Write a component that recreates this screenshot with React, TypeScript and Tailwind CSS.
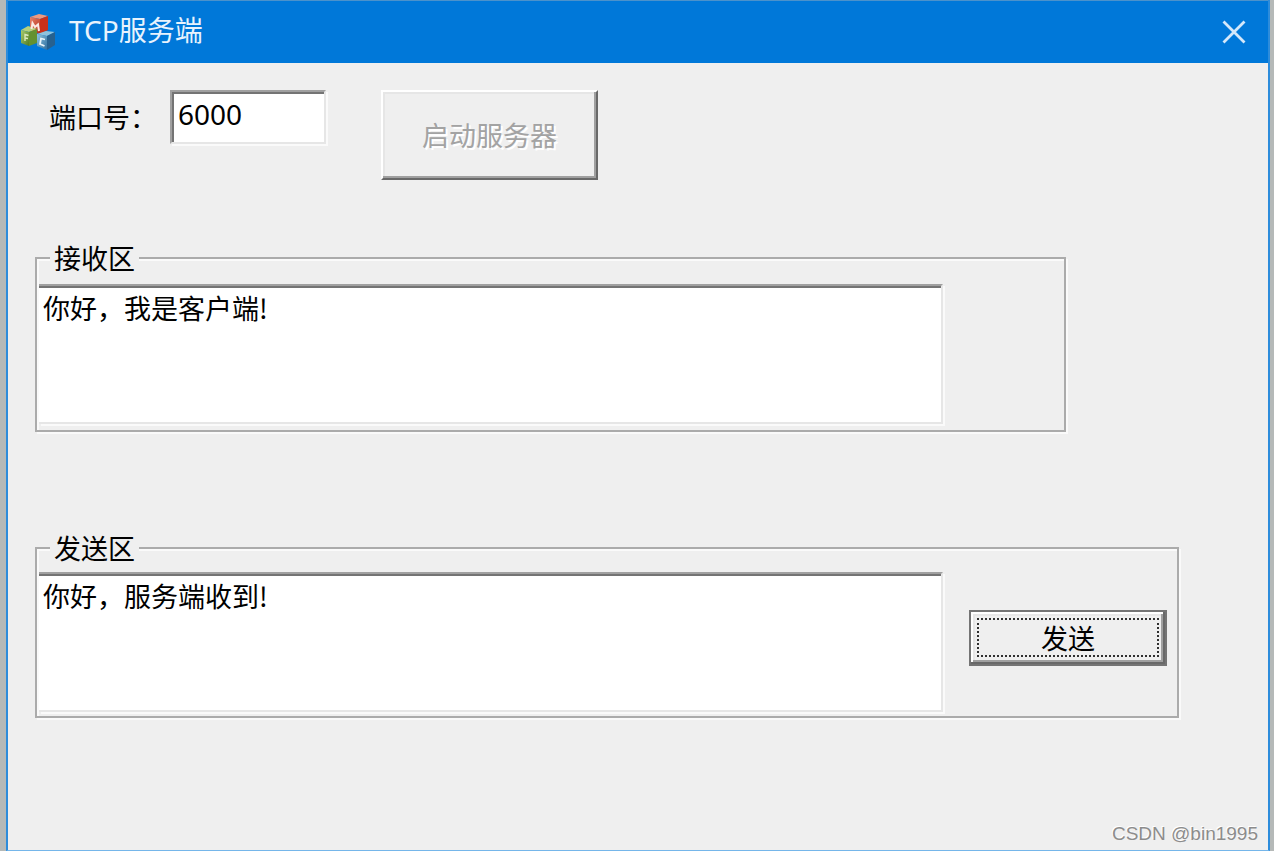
import { useState } from "react";

function CubesIcon() {
  return (
    <svg className="h-9 w-9 shrink-0" viewBox="0 0 36 36" aria-hidden="true">
      <defs>
        <linearGradient id="red" x1="0" y1="0" x2="1" y2="1">
          <stop offset="0" stopColor="#e8836a" />
          <stop offset="1" stopColor="#b32d1c" />
        </linearGradient>
        <linearGradient id="green" x1="0" y1="0" x2="1" y2="1">
          <stop offset="0" stopColor="#a9cc6c" />
          <stop offset="1" stopColor="#4f7a26" />
        </linearGradient>
        <linearGradient id="blue" x1="0" y1="0" x2="1" y2="1">
          <stop offset="0" stopColor="#8ec4e0" />
          <stop offset="1" stopColor="#2f6f9f" />
        </linearGradient>
      </defs>
      <path d="M9 3 L18 0 L27 2 L19 5 Z" fill="#ee9a80" />
      <path d="M9 3 L19 5 L19 20 L9 17 Z" fill="url(#red)" />
      <path d="M19 5 L27 2 L27 16 L19 20 Z" fill="#c9301b" />
      <path d="M0 16 L7 12 L16 15 L8 18 Z" fill="#b5d17c" />
      <path d="M0 16 L8 18 L8 32 L0 29 Z" fill="url(#green)" />
      <path d="M8 18 L16 15 L16 29 L8 32 Z" fill="#64912f" />
      <path d="M16 20 L25 17 L34 18 L26 22 Z" fill="#8fc3de" />
      <path d="M16 20 L26 22 L26 36 L16 32 Z" fill="url(#blue)" />
      <path d="M26 22 L34 18 L34 31 L26 36 Z" fill="#27618f" />
      <path d="M10.500 15 L11.500 9 L14 13 L17 10.500 L18 17" fill="none" stroke="#fbe9e4" strokeWidth="2" />
      <path d="M4 27 L4 20.500 L7.500 21.500 M4 24 L7 24.500" fill="none" stroke="#dbe9bd" strokeWidth="1.400" />
      <path d="M24 25.500 L20 24.500 L19 30 L23.500 32" fill="none" stroke="#e9f5fb" strokeWidth="1.800" />
    </svg>
  );
}

const areaClass =
  "block h-[140px] min-w-0 flex-1 resize-none overflow-hidden rounded-none border-t-2 border-r-2 border-b-2 border-t-[#a0a0a0] border-r-[#e6e6e6] border-b-[#e6e6e6] bg-white pt-2 pl-1 text-[27px] leading-7 text-black shadow-[inset_0_2px_0_#747474,2px_2px_0_#fafafa] outline-none";
const groupClass =
  "min-w-0 border-2 border-[#ababab] pl-0.5 shadow-[2px_2px_0_#fafafa,inset_2px_2px_0_#fafafa]";
const legendClass = "ml-[11px] bg-[#efefef] px-1 text-[27px] leading-7";

export default function App() {
  const [port, setPort] = useState("6000");
  const [received, setReceived] = useState("你好，我是客户端!");
  const [outgoing, setOutgoing] = useState("你好，服务端收到!");

  return (
    <div className="flex min-h-screen bg-[#b5b9b8] pr-1 pl-1.5 font-['Noto_Sans_CJK_SC',sans-serif] text-black">
      <div className="flex flex-1 flex-col border-x-2 border-b border-x-[#2d8cdb] border-b-[#75b6ea] bg-[#efefef]">
        <header className="flex h-[63px] items-center border-t border-[#4c92cb] bg-[#0078d9] pr-5 pl-[13px] text-white">
          <CubesIcon />
          <h1 className="ml-3 flex-1 pb-1 font-['Noto_Sans','Noto_Sans_CJK_SC',sans-serif] text-[28px] leading-8 font-normal text-[#e8f3fd]">
            TCP服务端
          </h1>
          <button type="button" aria-label="关闭" className="p-0.5">
            <svg className="size-6" viewBox="0 0 24 24" fill="none" stroke="#d4e8fa" strokeWidth="2.800">
              <path d="M1.500 1.500 L22.500 22.500 M22.500 1.500 L1.500 22.500" />
            </svg>
          </button>
        </header>

        <main className="flex flex-1 flex-col pt-[27px] pl-[27px]">
          <div className="flex items-start pl-3.5">
            <label htmlFor="port" className="w-[121px] pt-[11px] text-[27px] leading-8">
              端口号：
            </label>
            <input
              id="port"
              value={port}
              onChange={(e) => setPort(e.target.value)}
              className="h-[54px] w-[156px] rounded-none border-2 border-t-[#a0a0a0] border-r-[#e6e6e6] border-b-[#e6e6e6] border-l-[#a0a0a0] bg-white pb-1.5 pl-1.5 font-['Noto_Sans',sans-serif] text-[28px] leading-8 shadow-[inset_2px_2px_0_#747474,2px_2px_0_#fafafa] outline-none"
            />
            <button
              type="button"
              disabled
              className="ml-[55px] h-[90px] w-[217px] border-2 border-t-white border-r-[#696969] border-b-[#696969] border-l-white text-[27px] text-[#a3a3a3] shadow-[inset_-2px_-2px_0_#a0a0a0,inset_2px_2px_0_#e6e6e6] [text-shadow:2px_2px_0_#ffffff]"
            >
              启动服务器
            </button>
          </div>

          <fieldset className={`${groupClass} mt-16 mr-[202px] pb-1.5`}>
            <legend className={legendClass}>接收区</legend>
            <div className="flex pt-3 pr-[121px]">
              <textarea
                aria-label="接收区"
                value={received}
                onChange={(e) => setReceived(e.target.value)}
                className={areaClass}
              />
            </div>
          </fieldset>

          <fieldset className={`${groupClass} mt-[102px] mr-[89px] pb-1`}>
            <legend className={legendClass}>发送区</legend>
            <div className="flex items-start gap-[26px] pt-2.5 pr-2.5">
              <textarea
                aria-label="发送区"
                value={outgoing}
                onChange={(e) => setOutgoing(e.target.value)}
                className={areaClass}
              />
              <button
                type="button"
                className="mt-[38px] h-14 w-[198px] border-2 border-[#747474] bg-[#efefef] px-1.5 pt-1.5 pb-[7px] text-[27px] leading-8 shadow-[inset_-2px_-2px_0_#696969,inset_2px_2px_0_#ffffff,inset_-4px_-4px_0_#a0a0a0,inset_4px_4px_0_#e6e6e6]"
              >
                <span className="flex h-full items-center justify-center border-2 border-dotted border-[#303030]">
                  发送
                </span>
              </button>
            </div>
          </fieldset>

          <footer className="mt-auto pr-2.5 pb-1 text-right font-['Liberation_Sans',sans-serif] text-[19px] leading-6 text-[#8c8c8c] [text-shadow:-1px_-1px_0_#ffffff]">
            CSDN @bin1995
          </footer>
        </main>
      </div>
    </div>
  );
}
